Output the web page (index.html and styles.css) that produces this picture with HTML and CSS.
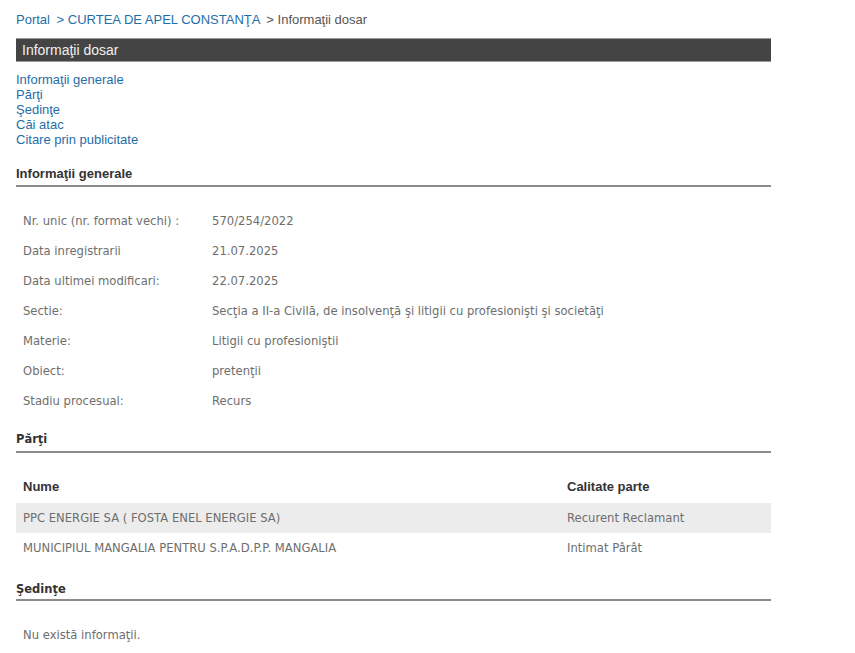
FILE: index.html
```html
<!DOCTYPE html>
<html>
<head>
  <meta charset="UTF-8">
  <title>Informaţii dosar</title>
  <link rel="stylesheet" href="styles.css">
</head>
<body>
  <div class="page">
    <div class="crumbs">
      <a href="#">Portal</a>
      <a href="#" class="sep">&gt; CURTEA DE APEL CONSTANŢA</a>
      <span class="sep">&gt; Informaţii dosar</span>
    </div>

    <div class="titlebar">Informaţii dosar</div>

    <!-- cuprins -->
    <ul class="toc">
      <li><a href="#generale">Informaţii generale</a></li>
      <li><a href="#parti">Părţi</a></li>
      <li><a href="#sedinte">Şedinţe</a></li>
      <li><a href="#cai">Căi atac</a></li>
      <li><a href="#citare">Citare prin publicitate</a></li>
    </ul>

    <h3 class="section" id="generale">Informaţii generale</h3>
    <div class="info">
      <div class="lbl">Nr. unic (nr. format vechi) :</div><div class="val">570/254/2022</div>
      <div class="lbl">Data inregistrarii</div><div class="val">21.07.2025</div>
      <div class="lbl">Data ultimei modificari:</div><div class="val">22.07.2025</div>
      <div class="lbl">Sectie:</div><div class="val">Secţia a II-a Civilă, de insolvenţă şi litigii cu profesionişti şi societăţi</div>
      <div class="lbl">Materie:</div><div class="val">Litigii cu profesioniştii</div>
      <div class="lbl">Obiect:</div><div class="val">pretenţii</div>
      <div class="lbl">Stadiu procesual:</div><div class="val">Recurs</div>
    </div>

    <h3 class="section alt" id="parti">Părţi</h3>
    <div class="parti">
      <div class="row head"><div>Nume</div><div>Calitate parte</div></div>
      <div class="row odd"><div>PPC ENERGIE SA ( FOSTA ENEL ENERGIE SA)</div><div>Recurent Reclamant</div></div>
      <div class="row"><div>MUNICIPIUL MANGALIA PENTRU S.P.A.D.P.P. MANGALIA</div><div>Intimat Pârât</div></div>
    </div>

    <h3 class="section alt" id="sedinte">Şedinţe</h3>
    <p class="empty">Nu există informaţii.</p>
  </div>
</body>
</html>
```

FILE: styles.css
```css
body {
  margin: 0;
  background: #fff;
  font-family: "Liberation Sans", Arial, sans-serif;
  font-size: 13px;
  color: #333;
}
a {
  color: #1f6ea8;
  text-decoration: none;
}
.page {
  width: 755px;
  padding: 12px 0 0 16px;
}

.crumbs {
  line-height: 16px;
  color: #555;
}
.crumbs .sep {
  margin-left: 3px;
}
.crumbs span.sep {
  color: #555;
}

.titlebar {
  margin-top: 10px;
  height: 22px;
  line-height: 22px;
  background: #444;
  border-top: 1px solid #9a9a9a;
  border-bottom: 1px solid #9a9a9a;
  color: #f0f0f0;
  font-size: 14px;
  padding-left: 6px;
}

.toc {
  list-style: none;
  margin: 10px 0 0;
  padding: 0;
  line-height: 15px;
}

.section {
  margin: 19px 0 0;
  font-size: 13px;
  font-weight: bold;
  line-height: 16px;
  color: #333;
  padding-bottom: 3px;
  border-bottom: 2px solid #8c8c8c;
}
.section.alt {
  font-family: "DejaVu Sans", Verdana, sans-serif;
  font-size: 11.5px;
  margin-top: 15px;
  padding-bottom: 4px;
}
#sedinte {
  margin-top: 18px;
  padding-bottom: 2px;
}

.info {
  display: grid;
  grid-template-columns: 189px 1fr;
  margin-top: 19px;
  font-family: "DejaVu Sans", Verdana, sans-serif;
  font-size: 11.6px;
  color: #6e6e6e;
}
.info > div {
  height: 30px;
  line-height: 30px;
  padding-left: 7px;
}

.parti {
  margin-top: 19px;
}
.parti .row {
  display: grid;
  grid-template-columns: 544px 1fr;
  height: 30px;
  line-height: 30px;
  font-family: "DejaVu Sans", Verdana, sans-serif;
  font-size: 11.6px;
  color: #6e6e6e;
}
.parti .row > div {
  padding-left: 7px;
}
.parti .row.head {
  height: 31px;
  font-family: "Liberation Sans", Arial, sans-serif;
  font-size: 13px;
  font-weight: bold;
  color: #333;
}
.parti .row.odd {
  background: #ececec;
}

.empty {
  margin: 19px 0 0;
  padding-left: 7px;
  line-height: 30px;
  font-family: "DejaVu Sans", Verdana, sans-serif;
  font-size: 11.6px;
  color: #6e6e6e;
}
```
